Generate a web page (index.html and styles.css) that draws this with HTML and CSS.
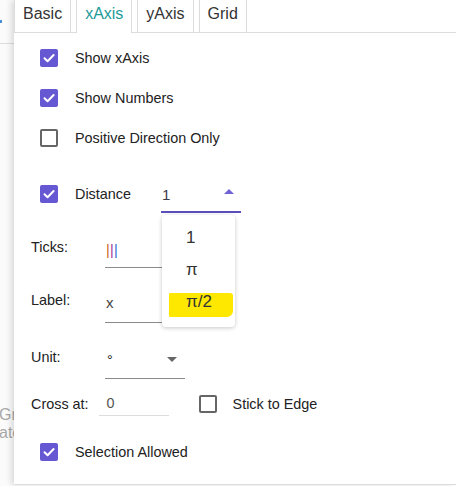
FILE: index.html
```html
<!DOCTYPE html>
<html>
<head>
<meta charset="utf-8">
<link rel="stylesheet" href="styles.css">
</head>
<body>
<div class="page">
  <aside class="strip">
    <div class="strip-top"><span class="strip-mark"></span></div>
    <div class="strip-text">Gra<br>atc</div>
  </aside>
  <main class="panel">
    <nav class="tabs">
      <div class="tab">Basic</div>
      <div class="tab active">xAxis</div>
      <div class="tab">yAxis</div>
      <div class="tab">Grid</div>
    </nav>
    <div class="content">
      <div class="check-row">
        <span class="cb on"><svg viewBox="0 0 18 18"><path d="M4.5 9.3 L7.6 12.3 L13.6 6"/></svg></span>
        <span class="cb-label">Show xAxis</span>
      </div>
      <div class="check-row">
        <span class="cb on"><svg viewBox="0 0 18 18"><path d="M4.5 9.3 L7.6 12.3 L13.6 6"/></svg></span>
        <span class="cb-label">Show Numbers</span>
      </div>
      <div class="check-row">
        <span class="cb"></span>
        <span class="cb-label">Positive Direction Only</span>
      </div>
      <div class="check-row distance-row">
        <span class="cb on"><svg viewBox="0 0 18 18"><path d="M4.5 9.3 L7.6 12.3 L13.6 6"/></svg></span>
        <span class="cb-label distance-label">Distance</span>
        <div class="select active-select">
          <span class="select-value">1</span>
          <span class="arrow-up"></span>
        </div>
      </div>
      <div class="field ticks-row">
        <span class="field-label">Ticks:</span>
        <div class="input"><span class="t1">|</span><span class="t2">|</span><span class="t3">|</span></div>
      </div>
      <div class="field label-row">
        <span class="field-label">Label:</span>
        <div class="input">x</div>
      </div>
      <div class="field unit-row">
        <span class="field-label">Unit:</span>
        <div class="input unit-select">
          <span>°</span>
          <span class="arrow-down"></span>
        </div>
      </div>
      <div class="cross-row">
        <span class="cross-label">Cross at:</span>
        <div class="cross-input">0</div>
        <span class="cb cross-cb"></span>
        <span class="cb-label">Stick to Edge</span>
      </div>
      <div class="check-row selection-row">
        <span class="cb on"><svg viewBox="0 0 18 18"><path d="M4.5 9.3 L7.6 12.3 L13.6 6"/></svg></span>
        <span class="cb-label">Selection Allowed</span>
      </div>
    </div>
    <ul class="menu">
      <li class="menu-item">1</li>
      <li class="menu-item">π</li>
      <li class="menu-item marked"><span class="marker"></span><span class="menu-text">π/2</span></li>
    </ul>
  </main>
</div>
</body>
</html>
```
FILE: styles.css
```css
* { box-sizing: border-box; }
html, body { margin: 0; padding: 0; background: #fff; }
body {
  font-family: "Liberation Sans", Arial, sans-serif;
  font-size: 14.4px;
  color: #222;
}
.page {
  display: flex;
  width: 456px;
  height: 486px;
  overflow: hidden;
}
.strip {
  width: 14px;
  flex: none;
  overflow: hidden;
  display: flex;
  flex-direction: column;
  background: #fbfbfb;
}
.strip-top {
  height: 44px;
  border-bottom: 1px solid #dcdcdc;
  position: relative;
}
.strip-mark {
  display: block;
  width: 2px;
  height: 3px;
  margin-top: 20px;
  background: #4a90d9;
}
.strip-text {
  margin-top: 362px;
  margin-left: -1px;
  font-size: 16px;
  line-height: 18px;
  color: #a8a8a8;
  white-space: nowrap;
}
.panel {
  position: relative;
  flex: 1;
  height: 485px;
  background: #fff;
  border-bottom: 1px solid #dcdcdc;
  box-shadow: -3px 0 6px rgba(0, 0, 0, 0.13);
}
.tabs {
  display: flex;
  gap: 5px;
  height: 33px;
  border-bottom: 1px solid #dcdcdc;
}
.tab {
  padding: 0 8px;
  font-size: 16px;
  line-height: 28px;
  color: #333;
  border-left: 1px solid #dcdcdc;
  border-right: 1px solid #dcdcdc;
  background: #fff;
}
.tab.active {
  color: #1d9a9a;
  height: 33px;
  position: relative;
}
.content {
  padding-top: 5px;
  display: flex;
  flex-direction: column;
}
.check-row {
  display: flex;
  align-items: center;
  height: 40px;
  padding-left: 26px;
}
.cb {
  width: 18px;
  height: 18px;
  flex: none;
  border-radius: 2px;
  border: 2px solid #666;
  margin-right: 17px;
  display: flex;
}
.cb.on {
  border: none;
  background: #6657d3;
}
.cb svg {
  width: 18px;
  height: 18px;
}
.cb svg path {
  fill: none;
  stroke: #fff;
  stroke-width: 2;
  stroke-linecap: round;
  stroke-linejoin: round;
}
.cb-label {
  line-height: 18px;
}
.distance-row {
  margin-top: 16px;
}
.distance-label {
  width: 86px;
}
.select {
  width: 80px;
  height: 39px;
  align-self: flex-start;
  padding: 3px 7px 0 1px;
  border-bottom: 2px solid #5a4fb8;
  display: flex;
  align-items: center;
  justify-content: space-between;
}
.select-value {
  font-size: 15px;
  color: #3b3b4a;
}
.arrow-up {
  width: 0;
  height: 0;
  border-left: 5px solid transparent;
  border-right: 5px solid transparent;
  border-bottom: 5px solid #6e62d4;
  margin-top: -5px;
}
.arrow-down {
  width: 0;
  height: 0;
  border-left: 5px solid transparent;
  border-right: 5px solid transparent;
  border-top: 5px solid #666;
  margin-top: 0;
}
.field {
  display: flex;
  align-items: flex-start;
  padding-left: 17px;
}
.field-label {
  width: 74px;
  line-height: 18px;
  margin-top: 10px;
}
.input {
  width: 80px;
  padding-top: 13px;
  padding-left: 1px;
  line-height: 18px;
  border-bottom: 1px solid #8a8a8a;
}
.ticks-row { margin-top: 14px; }
.ticks-row .input { height: 40px; }
.t1 { color: #c86a22; }
.t2 { color: #9c3a98; }
.t3 { color: #2c6fd0; }
.t1, .t2, .t3 { display: inline-block; width: 4px; }
.label-row { margin-top: 13px; }
.label-row .input { height: 42px; font-size: 15px; color: #444; }
.unit-row { margin-top: 15px; }
.unit-select {
  height: 41px;
  display: flex;
  justify-content: space-between;
  align-items: flex-start;
  padding-left: 2px;
  padding-right: 8px;
}
.unit-select .arrow-down { margin-top: 6px; }
.cross-row {
  display: flex;
  align-items: center;
  height: 24px;
  margin-top: 13px;
  padding-left: 17px;
}
.cross-label {
  margin-right: 10px;
}
.cross-input {
  width: 70px;
  height: 24px;
  padding-left: 8px;
  line-height: 22px;
  color: #555;
  border-bottom: 1px solid #dcdcdc;
}
.cross-cb {
  margin-left: 30px;
  margin-right: 16px;
}
.selection-row { margin-top: 16px; }
.menu {
  position: absolute;
  left: 148px;
  top: 215px;
  width: 73px;
  height: 112px;
  margin: 0;
  padding: 7px 0 0 0;
  list-style: none;
  background: #fff;
  border-radius: 4px;
  box-shadow: 0 1px 4px rgba(0, 0, 0, 0.22);
}
.menu-item {
  height: 32px;
  line-height: 32px;
  padding-left: 24px;
  font-size: 17px;
  color: #333;
  position: relative;
}
.marker {
  position: absolute;
  left: 7px;
  top: 7px;
  width: 64px;
  height: 24px;
  background: #ffe800;
  border-radius: 1px 3px 6px 1px;
}
.menu-text {
  position: relative;
}
```
